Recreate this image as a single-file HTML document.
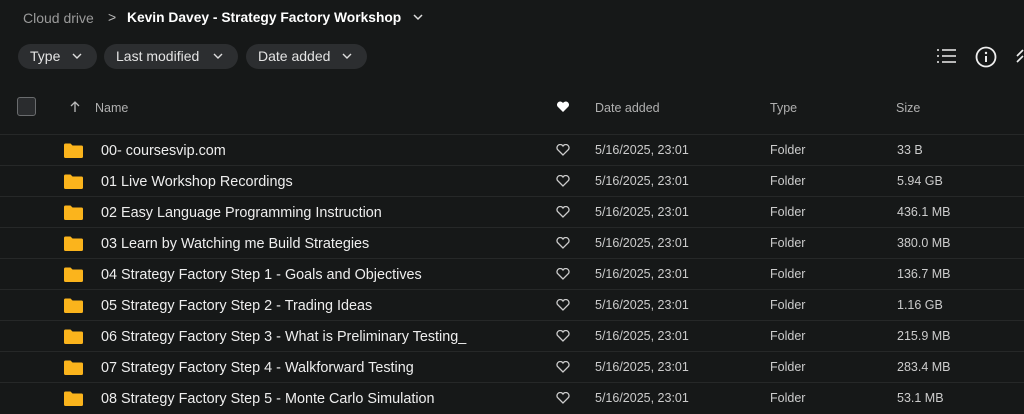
<!DOCTYPE html>
<html><head><style>
body{margin:0;width:1024px;height:412px;background:#161818;font-family:"Liberation Sans",sans-serif;overflow:hidden;position:relative;color:#e6e6e6}
.a{position:absolute;white-space:nowrap}
.pill{position:absolute;top:44px;height:25px;border-radius:13px;background:#2c2e30;color:#e4e4e4;font-size:14px;line-height:25px;padding-left:12px;box-sizing:border-box}
.pill svg{position:absolute;top:9px}
.row{position:absolute;left:0;width:1024px;height:31px;border-top:1px solid #262828;font-size:14.4px}
.row span{position:absolute;top:7.5px}
.fold{position:absolute;left:64px;top:8px;width:19px;height:15px}
</style></head><body>
<div class="a" style="left:23px;top:10px;font-size:14px;color:#9a9a9a">Cloud drive</div>
<div class="a" style="left:108px;top:9px;font-size:14px;color:#bbb">&gt;</div>
<div class="a" style="left:127px;top:10px;font-size:13.8px;font-weight:bold;color:#fff">Kevin Davey - Strategy Factory Workshop</div>
<svg class="a" style="left:412px;top:13px" width="12" height="8"><path d="M2 2l4 4 4-4" stroke="#ddd" stroke-width="1.5" fill="none"/></svg>
<div class="pill" style="left:18px;width:79px">Type<svg style="left:54px" width="10" height="7"><path d="M1 1l4 4 4-4" stroke="#ddd" stroke-width="1.4" fill="none"/></svg></div>
<div class="pill" style="left:104px;width:134px">Last modified<svg style="left:109px" width="10" height="7"><path d="M1 1l4 4 4-4" stroke="#ddd" stroke-width="1.4" fill="none"/></svg></div>
<div class="pill" style="left:246px;width:121px">Date added<svg style="left:96px" width="10" height="7"><path d="M1 1l4 4 4-4" stroke="#ddd" stroke-width="1.4" fill="none"/></svg></div>
<svg class="a" style="left:936px;top:48px" width="22" height="16"><g stroke="#eee" stroke-width="1.6"><path d="M1 2h2M1 8h2M1 14h2M6 2h14M6 8h14M6 14h14"/></g></svg>
<svg class="a" style="left:975px;top:46px" width="22" height="22"><circle cx="11" cy="11" r="9.5" stroke="#eee" stroke-width="1.8" fill="none"/><path d="M11 10v6" stroke="#eee" stroke-width="2"/><circle cx="11" cy="7" r="1.2" fill="#eee"/></svg>
<svg class="a" style="left:1016px;top:48px" width="8" height="16"><path d="M1 8l6-6M1 14l6-6" stroke="#eee" stroke-width="1.6" fill="none"/></svg>
<div class="a" style="left:17px;top:97px;width:19px;height:19px;border:1.5px solid #6a6c6e;border-radius:3px;box-sizing:border-box;background:#2a2c2e"></div>
<svg class="a" style="left:70px;top:101px" width="10" height="12"><path d="M5 11V1M1 5l4-4 4 4" stroke="#bbb" stroke-width="1.3" fill="none"/></svg>
<div class="a" style="left:95px;top:101px;font-size:12.5px;color:#b0b0b0">Name</div>
<svg class="a" style="left:556px;top:101px" width="14" height="12"><path d="M7 11L1.5 5.5A3 3 0 0 1 7 2a3 3 0 0 1 5.5 3.5z" fill="#fff"/></svg>
<div class="a" style="left:595px;top:101px;font-size:12.5px;color:#b0b0b0">Date added</div>
<div class="a" style="left:770px;top:101px;font-size:12.5px;color:#b0b0b0">Type</div>
<div class="a" style="left:896px;top:101px;font-size:12.5px;color:#b0b0b0">Size</div>
<div id="rows"></div>
<script>
var d=[["00- coursesvip.com","33 B"],["01 Live Workshop Recordings","5.94 GB"],["02 Easy Language Programming Instruction","436.1 MB"],["03 Learn by Watching me Build Strategies","380.0 MB"],["04 Strategy Factory Step 1 - Goals and Objectives","136.7 MB"],["05 Strategy Factory Step 2 - Trading Ideas","1.16 GB"],["06 Strategy Factory Step 3 - What is Preliminary Testing_","215.9 MB"],["07 Strategy Factory Step 4 - Walkforward Testing","283.4 MB"],["08 Strategy Factory Step 5 - Monte Carlo Simulation","53.1 MB"]];
var h="";d.forEach(function(r,i){h+='<div class="row" style="top:'+(134+31*i)+'px"><svg class="fold" viewBox="0 0 19 15"><path d="M0 2a1.5 1.5 0 0 1 1.5-1.5h5l2 2h9A1.5 1.5 0 0 1 19 4v9.5a1.5 1.5 0 0 1-1.5 1.5h-16A1.5 1.5 0 0 1 0 13.5z" fill="#fbb41c"/></svg><span style="left:101px;color:#eee">'+r[0]+'</span><svg style="position:absolute;left:556px;top:9px" width="14" height="12"><path d="M7 11L1.5 5.5A3 3 0 0 1 7 2a3 3 0 0 1 5.5 3.5z" fill="none" stroke="#ccc" stroke-width="1.3"/></svg><span style="left:595px;font-size:12.5px;color:#ccc;top:8px">5/16/2025, 23:01</span><span style="left:770px;font-size:12.5px;color:#ccc;top:8px">Folder</span><span style="left:897px;font-size:12.5px;color:#ccc;top:8px">'+r[1]+'</span></div>'});
document.getElementById("rows").innerHTML=h;
</script>
</body></html>
